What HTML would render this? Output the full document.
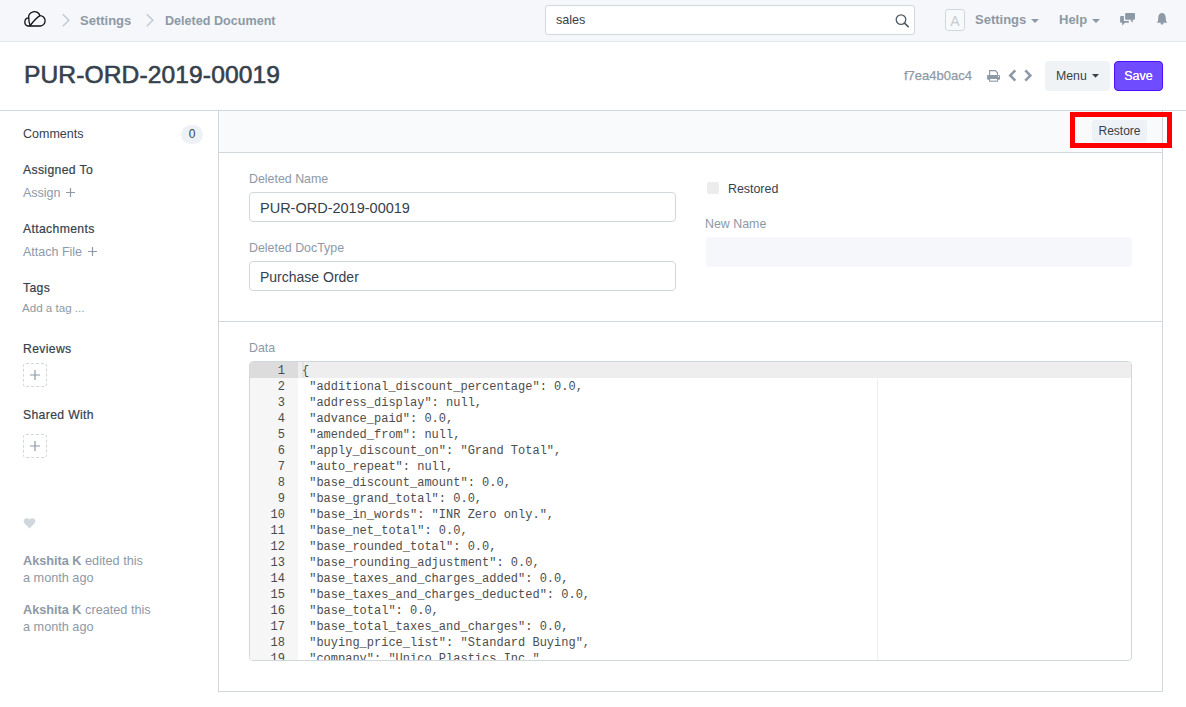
<!DOCTYPE html>
<html><head><meta charset="utf-8">
<style>
*{box-sizing:border-box;margin:0;padding:0}
html,body{width:1186px;height:707px;overflow:hidden;background:#fff}
body{position:relative;font-family:"Liberation Sans",sans-serif;color:#36414c}
.a{position:absolute;white-space:pre}
.nav{position:absolute;left:0;top:0;width:1186px;height:42px;background:#f5f7fa;border-bottom:1px solid #e3e8ec}
.bc{font-size:13px;font-weight:700;color:#8d99a6;line-height:13px}
.muted{color:#8d99a6}
.sb-h{font-size:12.2px;font-weight:400;-webkit-text-stroke:0.2px #36414c;color:#36414c;line-height:12px;letter-spacing:0.35px}
.sb-l{font-size:12.5px;color:#8d99a6;line-height:13px}
.lbl{font-size:12.4px;color:#8d99a6;line-height:13px}
.inp{position:absolute;border:1px solid #d1d8dd;border-radius:4px;background:#fff}
.code{position:absolute;font-family:"Liberation Mono",monospace;font-size:12px;line-height:16px;white-space:pre;color:#333}
.plus{position:absolute;width:24px;height:24px;border:1px dashed #d1d8dd;border-radius:3px}
</style></head><body>

<!-- NAVBAR -->
<div class="nav"></div>
<svg class="a" style="left:20px;top:8px" width="30" height="22" viewBox="0 0 30 22">
  <path d="M10.2 17.4 C9.2 15 8.7 12 8.8 9.9 A5.6 5.0 0 0 1 19.9 7.6 A4.9 5.1 0 0 1 20.3 18.0 L8 18.0 A4.0 4.1 0 0 1 8.6 9.9" fill="none" stroke="#111" stroke-width="1.3" stroke-linejoin="round"/>
  <path d="M10.2 17.5 Q16.2 9.8 19.9 7.6" fill="none" stroke="#111" stroke-width="1.3" stroke-linecap="round"/>
</svg>
<svg class="a" style="left:61px;top:13px" width="10" height="15" viewBox="0 0 10 15"><path d="M1.8 1.3 L7.8 7.2 L1.8 13.2" fill="none" stroke="#c0cad3" stroke-width="1.5"/></svg>
<div class="a bc" style="left:80px;top:14px">Settings</div>
<svg class="a" style="left:145px;top:13px" width="10" height="15" viewBox="0 0 10 15"><path d="M1.8 1.3 L7.8 7.2 L1.8 13.2" fill="none" stroke="#c0cad3" stroke-width="1.5"/></svg>
<div class="a bc" style="left:165px;top:15px;font-size:12.6px">Deleted Document</div>

<div class="inp" style="left:545px;top:5px;width:370px;height:30px;border-radius:3px"></div>
<div class="a" style="left:556px;top:14px;font-size:12.6px;line-height:13px;color:#36414c">sales</div>
<svg class="a" style="left:894px;top:12px" width="16" height="16" viewBox="0 0 16 16"><circle cx="7" cy="7.6" r="4.8" fill="none" stroke="#505a62" stroke-width="1.3"/><path d="M10.5 11.1 L14.2 14.6" stroke="#505a62" stroke-width="1.6" stroke-linecap="round"/></svg>

<div class="a" style="left:945px;top:9px;width:20px;height:22px;border:1px solid #d1d8dd;border-radius:3px;background:#f7f9fb"></div>
<div class="a" style="left:945px;top:14px;width:20px;text-align:center;font-size:14px;line-height:14px;color:#c5ccd3">A</div>
<div class="a bc" style="left:975px;top:13px">Settings</div>
<svg class="a" style="left:1030px;top:18px" width="10" height="6" viewBox="0 0 10 6"><path d="M1 1 L9 1 L5 5 Z" fill="#8d99a6"/></svg>
<div class="a bc" style="left:1059px;top:13px">Help</div>
<svg class="a" style="left:1091px;top:18px" width="10" height="6" viewBox="0 0 10 6"><path d="M1 1 L9 1 L5 5 Z" fill="#8d99a6"/></svg>
<svg class="a" style="left:1119px;top:12px" width="18" height="15" viewBox="0 0 18 15"><rect x="6.1" y="1.1" width="9.9" height="6.6" rx="1" fill="#8d99a6"/><path d="M11.2 7.5 L13.4 10.7 L14.2 7.5 Z" fill="#8d99a6"/><path d="M1.1 5.1 Q1.1 4.1 2.1 4.1 H4.9 V8.9 H9.9 V9.9 Q9.9 10.7 9.1 10.7 H5.9 L3.3 13.7 L3.1 10.7 H2.1 Q1.1 10.7 1.1 9.7 Z" fill="#8d99a6"/></svg>
<svg class="a" style="left:1155px;top:11px" width="14" height="16" viewBox="0 0 14 16"><path d="M7 2.1 C5 2.1 3.7 3.4 3.5 5.3 L2.9 9.9 C2.8 10.7 2.2 11.2 1.5 11.7 L12.5 11.7 C11.8 11.2 11.2 10.7 11.1 9.9 L10.5 5.3 C10.3 3.4 9 2.1 7 2.1 Z" fill="#8d99a6"/><path d="M5.4 11.5 H8.6 C8.4 13 7.8 13.7 7 13.7 C6.2 13.7 5.6 13 5.4 11.5 Z" fill="#8d99a6"/></svg>

<!-- PAGE HEAD -->
<div class="a" style="left:24px;top:62px;letter-spacing:0.1px;font-size:24.6px;line-height:25px;font-weight:400;-webkit-text-stroke:0.6px #36414c;color:#36414c">PUR-ORD-2019-00019</div>
<div class="a" style="left:904px;top:69px;font-size:13px;line-height:13px;color:#8d99a6;-webkit-text-stroke:0.25px #8d99a6">f7ea4b0ac4</div>
<svg class="a" style="left:986px;top:69px" width="16" height="14" viewBox="0 0 16 14"><path d="M3.6 6.5 V1.6 H9.3 L11.5 3.8 V6.5" fill="none" stroke="#8d99a6" stroke-width="1.1"/><rect x="1.1" y="6" width="12.9" height="4.7" rx="0.8" fill="#8d99a6"/><circle cx="12.5" cy="7.4" r="0.55" fill="#fff"/><rect x="3.6" y="9.4" width="7.9" height="2.8" fill="#fff" stroke="#8d99a6" stroke-width="1.1"/></svg>
<svg class="a" style="left:1007px;top:68px" width="11" height="15" viewBox="0 0 11 15"><path d="M8.3 2.3 L3.2 7.5 L8.3 12.7" fill="none" stroke="#8d99a6" stroke-width="2.5"/></svg>
<svg class="a" style="left:1023px;top:68px" width="11" height="15" viewBox="0 0 11 15"><path d="M2.3 2.3 L7.4 7.5 L2.3 12.7" fill="none" stroke="#8d99a6" stroke-width="2.5"/></svg>
<div class="a" style="left:1045px;top:61px;width:65px;height:30px;background:#f0f3f6;border-radius:4px"></div>
<div class="a" style="left:1056px;top:70px;font-size:12.3px;line-height:13px;color:#36414c">Menu</div>
<svg class="a" style="left:1091px;top:73px" width="9" height="6" viewBox="0 0 9 6"><path d="M1 1 L8 1 L4.5 4.7 Z" fill="#36414c"/></svg>
<div class="a" style="left:1114px;top:61px;width:49px;height:30px;background:#704cff;border:1px solid #4c10ff;border-radius:4px"></div>
<div class="a" style="left:1114px;top:70px;width:49px;text-align:center;font-size:12.5px;line-height:13px;font-weight:400;color:#fff;text-shadow:0 0 0.4px #fff">Save</div>

<div class="a" style="left:0;top:110px;width:1186px;height:1px;background:#d1d8dd"></div>

<!-- SIDEBAR -->
<div class="a" style="left:23px;top:128px;font-size:12.5px;line-height:13px;color:#36414c">Comments</div>
<div class="a" style="left:181px;top:125px;width:22px;height:19px;border-radius:10px;background:#eef1f5"></div>
<div class="a" style="left:181px;top:128px;width:22px;text-align:center;font-size:12px;line-height:13px;color:#36414c">0</div>

<div class="a sb-h" style="left:23px;top:164px">Assigned To</div>
<div class="a sb-l" style="left:23px;top:187px">Assign</div>
<svg class="a" style="left:65px;top:187px" width="11" height="11" viewBox="0 0 11 11"><path d="M5.5 1 V10 M1 5.5 H10" stroke="#8d99a6" stroke-width="1.2"/></svg>

<div class="a sb-h" style="left:23px;top:223px">Attachments</div>
<div class="a sb-l" style="left:23px;top:246px">Attach File</div>
<svg class="a" style="left:87px;top:246px" width="11" height="11" viewBox="0 0 11 11"><path d="M5.5 1 V10 M1 5.5 H10" stroke="#8d99a6" stroke-width="1.2"/></svg>

<div class="a sb-h" style="left:23px;top:282px">Tags</div>
<div class="a" style="left:22px;top:302px;font-size:11.6px;line-height:12px;color:#8d99a6">Add a tag ...</div>

<div class="a sb-h" style="left:23px;top:343px">Reviews</div>
<div class="plus" style="left:23px;top:363px"></div>
<svg class="a" style="left:29px;top:369px" width="12" height="12" viewBox="0 0 12 12"><path d="M6 1 V11 M1 6 H11" stroke="#8d99a6" stroke-width="1.2"/></svg>

<div class="a sb-h" style="left:23px;top:409px">Shared With</div>
<div class="plus" style="left:23px;top:434px"></div>
<svg class="a" style="left:29px;top:440px" width="12" height="12" viewBox="0 0 12 12"><path d="M6 1 V11 M1 6 H11" stroke="#8d99a6" stroke-width="1.2"/></svg>

<svg class="a" style="left:23px;top:517px" width="13" height="12" viewBox="0 0 13 12"><path d="M6.5 11.5 L1.6 6.6 C0.2 5.2 0.3 2.9 1.9 1.8 C3.4 0.8 5.3 1.2 6.5 2.6 C7.7 1.2 9.6 0.8 11.1 1.8 C12.7 2.9 12.8 5.2 11.4 6.6 Z" fill="#d1d8dd"/></svg>

<div class="a" style="left:23px;top:555px;font-size:12.7px;line-height:13px;color:#8d99a6"><b>Akshita K</b> edited this</div>
<div class="a" style="left:23px;top:572px;font-size:12.7px;line-height:13px;color:#8d99a6">a month ago</div>
<div class="a" style="left:23px;top:604px;font-size:12.7px;line-height:13px;color:#8d99a6"><b>Akshita K</b> created this</div>
<div class="a" style="left:23px;top:621px;font-size:12.7px;line-height:13px;color:#8d99a6">a month ago</div>

<!-- MAIN PANEL -->
<div class="a" style="left:218px;top:110px;width:945px;height:582px;border:1px solid #d1d8dd;border-top:none"></div>
<div class="a" style="left:219px;top:111px;width:943px;height:42px;background:#f9fafb;border-bottom:1px solid #d1d8dd"></div>
<div class="a" style="left:1092px;top:120px;width:55px;height:22px;background:#eef1f5;border-radius:3px"></div>
<div class="a" style="left:1092px;top:125px;width:55px;text-align:center;font-size:12px;line-height:12px;color:#36414c">Restore</div>
<div class="a" style="left:1070px;top:112px;width:102px;height:36px;border:5px solid #ff0000"></div>

<div class="a lbl" style="left:249px;top:173px">Deleted Name</div>
<div class="inp" style="left:249px;top:192px;width:427px;height:30px"></div>
<div class="a" style="left:260px;top:201px;font-size:14.5px;line-height:14px;color:#36414c">PUR-ORD-2019-00019</div>
<div class="a lbl" style="left:249px;top:242px">Deleted DocType</div>
<div class="inp" style="left:249px;top:261px;width:427px;height:30px"></div>
<div class="a" style="left:260px;top:270px;font-size:14px;line-height:14px;color:#36414c">Purchase Order</div>

<div class="a" style="left:707px;top:182px;width:12px;height:12px;background:#ececec;border-radius:2px"></div>
<div class="a" style="left:728px;top:183px;font-size:12.4px;line-height:13px;color:#36414c">Restored</div>
<div class="a lbl" style="left:705px;top:218px">New Name</div>
<div class="a" style="left:706px;top:237px;width:426px;height:30px;background:#f5f7fa;border-radius:4px"></div>

<div class="a" style="left:219px;top:321px;width:943px;height:1px;background:#d1d8dd"></div>

<div class="a lbl" style="left:249px;top:342px">Data</div>
<div id="ed" class="a" style="left:249px;top:361px;width:883px;height:300px;border:1px solid #d1d8dd;border-radius:4px;overflow:hidden;background:#fff">
  <div class="a" style="left:0;top:0;width:48px;height:300px;background:#f6f6f6"></div>
  <div class="a" style="left:0;top:0;width:48px;height:16px;background:#dcdcdc"></div>
  <div class="a" style="left:48px;top:0;width:835px;height:16px;background:#eeeeee"></div>
  <div class="a" style="left:52px;top:0;width:2px;height:16px;background:#e2e2e2"></div>
  <div class="a" style="left:627px;top:16px;width:1px;height:284px;background:#f0f0f0"></div>
  <div class="code" style="left:0;top:1px;width:35px;text-align:right;color:#4a4a4a">1
2
3
4
5
6
7
8
9
10
11
12
13
14
15
16
17
18
19</div>
  <div class="code" style="left:52px;top:1px;color:#4d4d4d">{
 "additional_discount_percentage": 0.0,
 "address_display": null,
 "advance_paid": 0.0,
 "amended_from": null,
 "apply_discount_on": "Grand Total",
 "auto_repeat": null,
 "base_discount_amount": 0.0,
 "base_grand_total": 0.0,
 "base_in_words": "INR Zero only.",
 "base_net_total": 0.0,
 "base_rounded_total": 0.0,
 "base_rounding_adjustment": 0.0,
 "base_taxes_and_charges_added": 0.0,
 "base_taxes_and_charges_deducted": 0.0,
 "base_total": 0.0,
 "base_total_taxes_and_charges": 0.0,
 "buying_price_list": "Standard Buying",
 "company": "Unico Plastics Inc.",</div>
</div>

</body></html>
